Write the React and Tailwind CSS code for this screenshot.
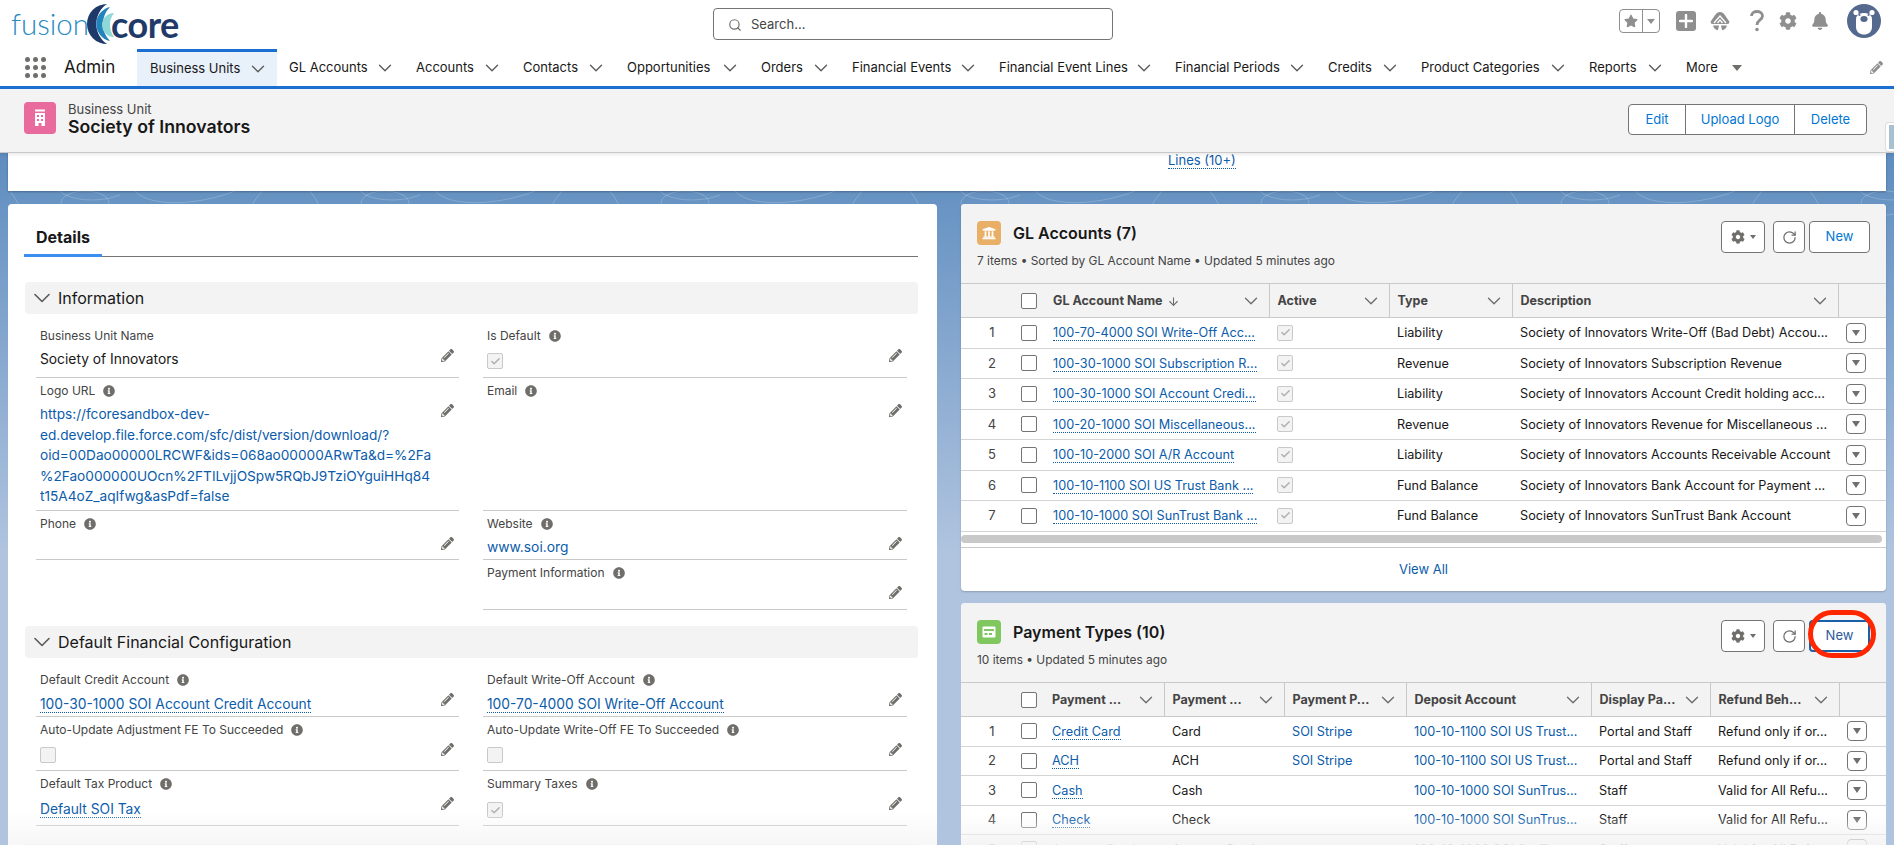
import React from 'react';
import { ChevronDown, Search, RotateCw, ArrowDown, Check } from 'lucide-react';
import { FaPencilAlt, FaInfoCircle, FaStar, FaCog, FaBell, FaUniversity } from 'react-icons/fa';

const NAV = [
  { label: 'GL Accounts', w: 'w-[127px]' },
  { label: 'Accounts', w: 'w-[107px]' },
  { label: 'Contacts', w: 'w-[104px]' },
  { label: 'Opportunities', w: 'w-[134px]' },
  { label: 'Orders', w: 'w-[91px]' },
  { label: 'Financial Events', w: 'w-[147px]' },
  { label: 'Financial Event Lines', w: 'w-[176px]' },
  { label: 'Financial Periods', w: 'w-[153px]' },
  { label: 'Credits', w: 'w-[93px]' },
  { label: 'Product Categories', w: 'w-[168px]' },
  { label: 'Reports', w: 'w-[97px]' },
];

const GL_ROWS = [
  ['100-70-4000 SOI Write-Off Acc...', 'Liability', 'Society of Innovators Write-Off (Bad Debt) Accou...'],
  ['100-30-1000 SOI Subscription R...', 'Revenue', 'Society of Innovators Subscription Revenue'],
  ['100-30-1000 SOI Account Credi...', 'Liability', 'Society of Innovators Account Credit holding acc...'],
  ['100-20-1000 SOI Miscellaneous...', 'Revenue', 'Society of Innovators Revenue for Miscellaneous ...'],
  ['100-10-2000 SOI A/R Account', 'Liability', 'Society of Innovators Accounts Receivable Account'],
  ['100-10-1100 SOI US Trust Bank ...', 'Fund Balance', 'Society of Innovators Bank Account for Payment ...'],
  ['100-10-1000 SOI SunTrust Bank ...', 'Fund Balance', 'Society of Innovators SunTrust Bank Account'],
];

const PAYMENT_ROWS = [
  ['Credit Card', 'Card', 'SOI Stripe', '100-10-1100 SOI US Trust...', 'Portal and Staff', 'Refund only if or...'],
  ['ACH', 'ACH', 'SOI Stripe', '100-10-1100 SOI US Trust...', 'Portal and Staff', 'Refund only if or...'],
  ['Cash', 'Cash', '', '100-10-1000 SOI SunTrus...', 'Staff', 'Valid for All Refu...'],
  ['Check', 'Check', '', '100-10-1000 SOI SunTrus...', 'Staff', 'Valid for All Refu...'],
  ['Account Credit', 'Account Credit', '', '100-10-1000 SOI SunTrus...', 'Staff', 'Valid for All Refu...'],
];

const cell = 'px-2 text-[12.7px] whitespace-nowrap overflow-hidden';
const dark = 'text-[#181818]';
const blue = 'text-[#0b5cab]';

const Pencil = () => (
  <span className="absolute right-[5px] top-[26px] text-[#706e6b]">
    <FaPencilAlt size={13} />
  </span>
);

const Info = () => <FaInfoCircle size={12} className="ml-2 text-[#706e6b]" />;

const DotLink = ({ children }) => (
  <a className="inline-block border-b border-dotted border-[#0b5cab] leading-[15px] text-[#0b5cab]">{children}</a>
);

const Disabled = ({ checked }) => (
  <span className="flex h-4 w-4 items-center justify-center rounded-[2px] border border-[#c9c9c9] bg-[#f3f3f3]">
    {checked && <Check size={11} strokeWidth={3} className="text-[#aeaeae]" />}
  </span>
);

const Box = () => <span className="block h-4 w-4 rounded-[2px] border border-[#747474] bg-white" />;

const Field = ({ label, info, h, children }) => (
  <div className={`relative border-b border-[#c9c9c9] px-1 pt-1 ${h}`}>
    <div className="flex h-[18px] items-center text-[12px] text-[#444444]">
      {label}
      {info && <Info />}
    </div>
    <div className="mt-1 text-[13.8px] leading-[20px] text-[#181818]">{children}</div>
    <Pencil />
  </div>
);

const Section = ({ title }) => (
  <div className="flex h-8 items-center rounded-[4px] bg-[#f3f3f3] pl-[3px] text-[16px] text-[#181818]">
    <ChevronDown size={28} strokeWidth={1.4} className="mr-[2px] text-[#5c5c5c]" />
    {title}
  </div>
);

const Th = ({ children, sort }) => (
  <th className="border-r border-[#c9c9c9] p-0 text-left">
    <div className="flex h-[33px] items-center justify-between pl-2 pr-[7px] pt-[1px] text-[12.5px] font-bold text-[#444444] whitespace-nowrap">
      <span className="flex items-center">
        {children}
        {sort && <ArrowDown size={13} className="ml-1 text-[#706e6b]" />}
      </span>
      <ChevronDown size={22} strokeWidth={1.5} className="text-[#706e6b]" />
    </div>
  </th>
);

const RowMenu = () => (
  <span className="ml-2 flex h-5 w-5 items-center justify-center rounded-[4px] border border-[#747474] bg-white">
    <span className="h-0 w-0 border-x-[4.5px] border-t-[6px] border-x-transparent border-t-[#706e6b]" />
  </span>
);

const CardHeader = ({ icon, title, sub, focused }) => (
  <div className="flex h-[79px] justify-between bg-[#f3f3f3] pl-4 pr-4 pt-[17px]">
    <div>
      <div className="flex h-6 items-center">
        {icon}
        <span className="ml-3 text-[16px] font-semibold text-[#181818]">{title}</span>
      </div>
      <div className="mt-[7px] text-[11.9px] leading-[18px] text-[#444444]">{sub}</div>
    </div>
    <div className="flex h-8">
      <button className="flex h-8 w-11 items-center justify-center gap-[5px] rounded-[4px] border border-[#747474] bg-white text-[#706e6b]">
        <FaCog size={14} />
        <span className="h-0 w-0 border-x-[3px] border-t-[4px] border-x-transparent border-t-[#706e6b]" />
      </button>
      <button className="ml-2 flex h-8 w-8 items-center justify-center rounded-[4px] border border-[#747474] bg-white text-[#706e6b]">
        <RotateCw size={15} />
      </button>
      {focused ? (
        <button className="relative ml-1 h-8 w-[61px] rounded-[4px] border-2 border-[#1b5fa8] bg-white text-[13px] text-[#2b5a9b]">
          New
          <span className="absolute -bottom-[8px] -left-[3px] -right-[8px] -top-[12px] rounded-[24px] border-[5px] border-[#ff2600]" />
        </button>
      ) : (
        <button className="ml-1 h-8 w-[61px] rounded-[4px] border border-[#747474] bg-white text-[13px] text-[#0176d3]">
          New
        </button>
      )}
    </div>
  </div>
);

const Logo = () => (
  <div className="flex w-[713px] items-center pl-[11px]">
    <span className="w-[76px] font-[Lato,sans-serif] text-[29.5px] font-light leading-none text-[#2a8ac0]">fusion</span>
    <svg viewBox="0 0 33 40" className="-mr-[9px] h-10 w-[33px] shrink-0">
      <path d="M20 0 A20 20 0 0 0 20 40 A24 24 0 0 1 20 0 Z" fill="#1f3a68" />
      <path d="M23 3 A17.400 17.400 0 0 0 23 37 A24 24 0 0 1 23 3 Z" fill="#2283bd" />
      <path d="M27 9 A12 12 0 0 0 27 33 A20 20 0 0 1 27 9 Z" fill="#8ed8d8" />
    </svg>
    <span className="font-[Lato,sans-serif] text-[36px] font-bold leading-none tracking-[-0.5px] text-[#1f3a68]">core</span>
  </div>
);

const Avatar = () => (
  <svg viewBox="0 0 34 34" className="ml-[18px] h-[34px] w-[34px]">
    <circle cx="17" cy="17" r="17" fill="#54698d" />
    <circle cx="9" cy="8.500" r="2.600" fill="#fff" />
    <circle cx="25" cy="8.500" r="2.600" fill="#fff" />
    <path d="M9 15 C9 7 25 7 25 15 L25 23 C25 33 9 33 9 23 Z" fill="#fff" />
    <circle cx="12.500" cy="11" r="1" fill="#54698d" />
    <circle cx="21.500" cy="11" r="1" fill="#54698d" />
    <ellipse cx="17" cy="15" rx="3.600" ry="3" fill="#54698d" />
  </svg>
);

const Trailhead = () => (
  <svg viewBox="0 0 20 20" className="ml-[14px] h-5 w-5 text-[#8f8f8f]" fill="currentColor">
    <path d="M10 1 C14 1 16 6 19 10 C20 12 19 13 17 13 L3 13 C1 13 0 12 1 10 C4 6 6 1 10 1 Z" />
    <path d="M3 14.500 L9 14.500 L8 19 C5.500 19 3.500 17 3 14.500 Z M11 14.500 L17 14.500 C16.500 17 14.500 19 12 19 Z" />
    <path d="M4 12 L10 5 L16 12 M7.500 12 L10 9 L12.500 12" fill="none" stroke="#fff" strokeWidth="1.300" />
  </svg>
);

export default function App() {
  return (
    <div className="flex h-[845px] w-[1894px] flex-col overflow-hidden bg-white font-[Inter,sans-serif]">
      {/* Global header */}
      <header className="flex h-[49px] shrink-0 items-start pt-[4px]">
        <Logo />
        <div className="mt-1 flex h-8 w-[400px] items-center rounded-[4px] border border-[#747474] bg-white pl-[14px] pt-[1px] text-[13px] text-[#444444]">
          <Search size={14} className="mr-[9px] text-[#706e6b]" />
          Search...
        </div>
        <div className="ml-auto flex items-center pr-[13px]">
          <div className="flex h-[24px] w-[41px] overflow-hidden rounded-[4px] border border-[#8f8f8f]">
            <span className="flex w-[23px] items-center justify-center border-r border-[#8f8f8f] text-[#8f8f8f]">
              <FaStar size={14} />
            </span>
            <span className="flex flex-1 items-center justify-center">
              <span className="h-0 w-0 border-x-[4px] border-t-[5px] border-x-transparent border-t-[#8f8f8f]" />
            </span>
          </div>
          <span className="ml-4 flex h-5 w-5 items-center justify-center rounded-[3px] bg-[#8f8f8f]">
            <svg viewBox="0 0 14 14" className="h-[14px] w-[14px]">
              <path d="M7 1 V13 M1 7 H13" stroke="#fff" strokeWidth="2.400" strokeLinecap="round" />
            </svg>
          </span>
          <Trailhead />
          <svg viewBox="0 0 14 22" className="ml-[20px] h-[22px] w-[14px] text-[#8f8f8f]" fill="none" stroke="currentColor">
            <path d="M1.500 6 C1.500 0 12.500 0 12.500 6 C12.500 10 7 10 7 15" strokeWidth="2.800" />
            <circle cx="7" cy="19.500" r="1.800" fill="currentColor" stroke="none" />
          </svg>
          <FaCog size={18} className="ml-[15px] text-[#8f8f8f]" />
          <FaBell size={18} className="ml-[14px] text-[#8f8f8f]" />
          <Avatar />
        </div>
      </header>

      {/* App nav */}
      <nav className="flex h-10 shrink-0 border-b-[3px] border-[#1b6fd1] bg-white text-[13px] text-[#181818]">
        <div className="grid w-[64px] shrink-0 place-content-start pl-[25px] pt-[8px]">
          <div className="grid grid-cols-3 gap-[3px]">
            {[0, 1, 2, 3, 4, 5, 6, 7, 8].map((i) => (
              <span key={i} className="h-[5px] w-[5px] rounded-full bg-[#706e6b]" />
            ))}
          </div>
        </div>
        <span className="flex w-[73px] shrink-0 items-center text-[17px]">Admin</span>
        <div className="flex w-[140px] shrink-0 items-center justify-between border-t-[3px] border-[#1b6fd1] bg-[#e8f0fa] pl-[13px] pr-[8px]">
          Business Units
          <ChevronDown size={22} strokeWidth={1.5} className="text-[#5c5c5c]" />
        </div>
        {NAV.map((n) => (
          <div key={n.label} className={`flex shrink-0 items-center justify-between pl-[12px] pr-[8px] ${n.w}`}>
            {n.label}
            <ChevronDown size={22} strokeWidth={1.5} className="text-[#5c5c5c]" />
          </div>
        ))}
        <div className="flex items-center pl-[12px]">
          More
          <span className="ml-[14px] h-0 w-0 border-x-[5px] border-t-[6px] border-x-transparent border-t-[#706e6b]" />
        </div>
        <span className="ml-auto flex items-center pr-[11px] text-[#8f8f8f]">
          <FaPencilAlt size={13} />
        </span>
      </nav>

      {/* Record highlights */}
      <div className="relative z-10 flex h-16 shrink-0 justify-between border-b border-[#c9c9c9] bg-[#f3f3f3] pl-6 pr-[27px] pt-[13px] shadow-[0_2px_3px_rgba(0,0,0,0.08)]">
        <div className="flex">
          <span className="flex h-8 w-8 items-center justify-center rounded-[4px] bg-[#e96a9d]">
            <svg viewBox="0 0 20 20" className="h-5 w-5" fill="#fff">
              <rect x="5" y="1.500" width="10" height="2" rx="0.500" />
              <path d="M5 5 H15 V18 H11.500 V15 H8.500 V18 H5 Z M7 7 V9 H9 V7 Z M11 7 V9 H13 V7 Z M7 11 V13 H9 V11 Z M11 11 V13 H13 V11 Z" fillRule="evenodd" />
            </svg>
          </span>
          <div className="ml-3 -mt-[1px]">
            <div className="text-[13px] leading-[16px] text-[#444444]">Business Unit</div>
            <div className="text-[17.700px] font-semibold leading-[20px] text-[#181818]">Society of Innovators</div>
          </div>
        </div>
        <div className="mt-[2px] flex h-[31px] rounded-[4px] border border-[#747474] bg-white text-[13px] text-[#0176d3]">
          <span className="flex w-[56px] items-center justify-center">Edit</span>
          <span className="flex w-[110px] items-center justify-center border-x border-[#747474]">Upload Logo</span>
          <span className="flex w-[71px] items-center justify-center">Delete</span>
        </div>
        <span className="absolute right-0 top-[33px] flex h-[30px] w-[9px] items-center rounded-l-[4px] border border-r-0 border-[#dddddd] bg-white pl-[3px]">
          <span className="h-[24px] w-full bg-[#a9c0d0]" />
        </span>
      </div>

      {/* Page body */}
      <main className="relative flex-1 overflow-hidden bg-linear-to-b from-[#5e8dbf] to-[#b0c4df] to-[58%] px-2">
        <svg viewBox="0 0 1894 120" className="absolute left-0 top-0 h-[120px] w-[1894px]" fill="none" stroke="#fff" strokeOpacity="0.2">
          {[0, 300, 600, 900, 1200, 1500, 1800].map((x) => (
            <g key={x} transform={`translate(${x} 0)`}>
              <path d="M60 38 C70 48 100 50 120 42 M135 38 C150 55 200 52 235 38" />
              <ellipse cx="85" cy="50" rx="24" ry="12" />
              <path d="M262 38 C258 44 255 46 252 52 M10 38 C14 44 18 48 18 52" />
            </g>
          ))}
        </svg>

        <div className="relative flex h-full flex-col">
          <div className="flex h-[38px] shrink-0 items-start bg-white pl-[1160px] text-[13px] shadow-[0_1px_2px_rgba(0,0,0,0.3)]">
            <div className="-mt-[2px]">
              <DotLink>Lines (10+)</DotLink>
            </div>
          </div>

          <div className="mt-[13px] flex min-h-0 flex-1 gap-6">
            {/* Details */}
            <section className="relative w-[929px] shrink-0 overflow-hidden rounded-t-[4px] bg-white pl-[17px] pr-[19px]">
              <div className="h-[53px] border-b border-[#747474] pl-[11px] pt-[23px]">
                <span className="relative -ml-[12px] block w-[78px] pl-[12px] text-[16px] font-bold leading-5 text-[#181818]">
                  Details
                  <span className="absolute -bottom-[10px] left-0 h-[3px] w-full bg-[#3b8ff0]" />
                </span>
              </div>
              <div className="mt-[25px]">
                <Section title="Information" />
                <div className="mt-[9px] grid grid-cols-[423px_424px] gap-x-6 px-[11px]">
                  <Field label="Business Unit Name" h="h-[55px]">Society of Innovators</Field>
                  <Field label="Is Default" info h="h-[55px]">
                    <div className="pt-1"><Disabled checked /></div>
                  </Field>
                  <Field label="Logo URL" info h="h-[133px]">
                    <div className="text-[13.650px] leading-[20.6px] whitespace-nowrap text-[#0b5cab]">
                      https://fcoresandbox-dev-<br />
                      ed.develop.file.force.com/sfc/dist/version/download/?<br />
                      oid=00Dao00000LRCWF&amp;ids=068ao00000ARwTa&amp;d=%2Fa<br />
                      %2Fao000000UOcn%2FTILvjjOSpw5RQbJ9TziOYguiHHq84<br />
                      t15A4oZ_aqIfwg&amp;asPdf=false
                    </div>
                  </Field>
                  <Field label="Email" info h="h-[133px]" />
                  <Field label="Phone" info h="h-[49px]" />
                  <Field label="Website" info h="h-[49px]">
                    <span className="text-[#0b5cab]">www.soi.org</span>
                  </Field>
                  <div />
                  <Field label="Payment Information" info h="h-[50px]" />
                </div>
              </div>
              <div className="mt-4">
                <Section title="Default Financial Configuration" />
                <div className="mt-[9px] grid grid-cols-[423px_424px] gap-x-6 px-[11px]">
                  <Field label="Default Credit Account" info h="h-[50px]">
                    <div className="pt-[1px]"><DotLink>100-30-1000 SOI Account Credit Account</DotLink></div>
                  </Field>
                  <Field label="Default Write-Off Account" info h="h-[50px]">
                    <div className="pt-[1px]"><DotLink>100-70-4000 SOI Write-Off Account</DotLink></div>
                  </Field>
                  <Field label="Auto-Update Adjustment FE To Succeeded" info h="h-[54px]">
                    <div className="pt-1"><Disabled /></div>
                  </Field>
                  <Field label="Auto-Update Write-Off FE To Succeeded" info h="h-[54px]">
                    <div className="pt-1"><Disabled /></div>
                  </Field>
                  <Field label="Default Tax Product" info h="h-[55px]">
                    <div className="pt-[2px]"><DotLink>Default SOI Tax</DotLink></div>
                  </Field>
                  <Field label="Summary Taxes" info h="h-[55px]">
                    <div className="pt-[5px]"><Disabled checked /></div>
                  </Field>
                </div>
              </div>
              <div className="mt-[18px] h-8 rounded-[4px] bg-[#f3f3f3]" />
              <div className="absolute inset-x-0 bottom-0 h-[35px] bg-linear-to-b from-transparent to-[#f3f3f3]/70" />
            </section>

            {/* Related lists */}
            <div className="flex min-w-0 flex-1 flex-col gap-3">
              <section className="h-[387px] shrink-0 overflow-hidden rounded-[4px] bg-white shadow-[0_1px_2px_rgba(0,0,0,0.2)]">
                <CardHeader
                  icon={
                    <span className="flex h-6 w-6 items-center justify-center rounded-[4px] bg-[#e9af67] text-white">
                      <FaUniversity size={14} />
                    </span>
                  }
                  title="GL Accounts (7)"
                  sub="7 items • Sorted by GL Account Name • Updated 5 minutes ago"
                />
                <table className="w-full table-fixed border-collapse">
                  <colgroup>
                    <col className="w-[52px]" />
                    <col className="w-8" />
                    <col className="w-[224px]" />
                    <col className="w-[120px]" />
                    <col className="w-[123px]" />
                    <col className="w-[326px]" />
                    <col />
                  </colgroup>
                  <thead className="border-y border-[#c9c9c9] bg-[#f3f3f3]">
                    <tr>
                      <th className="p-0" />
                      <th className="p-0 pl-2"><Box /></th>
                      <Th sort>GL Account Name</Th>
                      <Th>Active</Th>
                      <Th>Type</Th>
                      <Th>Description</Th>
                      <th className="p-0" />
                    </tr>
                  </thead>
                  <tbody>
                    {GL_ROWS.map((r, i) => (
                      <tr key={r[0]} className="h-[30.5px] border-b border-[#d4d4d4]">
                        <td className="pl-[10px] text-center text-[13px] text-[#444444]">{i + 1}</td>
                        <td className="pl-2"><Box /></td>
                        <td className={cell}><DotLink>{r[0]}</DotLink></td>
                        <td className={cell}><Disabled checked /></td>
                        <td className={`${cell} ${dark}`}>{r[1]}</td>
                        <td className={`${cell} ${dark}`}>{r[2]}</td>
                        <td><RowMenu /></td>
                      </tr>
                    ))}
                  </tbody>
                </table>
                <div className="flex h-[16px] items-center border-b border-[#c9c9c9] pr-[4px]">
                  <span className="h-2 w-full rounded-full bg-[#c9c9c9]" />
                </div>
                <div className="flex h-[44px] items-center justify-center text-[13px] text-[#0b5cab]">View All</div>
              </section>

              <section className="relative min-h-0 flex-1 overflow-hidden rounded-t-[4px] bg-white">
                <CardHeader
                  focused
                  icon={
                    <span className="flex h-6 w-6 items-center justify-center rounded-[4px] bg-[#7fc75e]">
                      <svg viewBox="0 0 16 16" className="h-4 w-4">
                        <rect x="1.500" y="2.500" width="13" height="11" rx="1" fill="#fff" />
                        <rect x="3" y="5" width="10" height="2" fill="#7fc75e" />
                        <rect x="3.500" y="9" width="3" height="2" fill="#7fc75e" />
                        <rect x="8" y="9" width="3" height="2" fill="#7fc75e" />
                      </svg>
                    </span>
                  }
                  title="Payment Types (10)"
                  sub="10 items • Updated 5 minutes ago"
                />
                <table className="w-full table-fixed border-collapse">
                  <colgroup>
                    <col className="w-[52px]" />
                    <col className="w-[31px]" />
                    <col className="w-[120px]" />
                    <col className="w-[120px]" />
                    <col className="w-[122px]" />
                    <col className="w-[185px]" />
                    <col className="w-[119px]" />
                    <col className="w-[129px]" />
                    <col />
                  </colgroup>
                  <thead className="border-y border-[#c9c9c9] bg-[#f3f3f3]">
                    <tr>
                      <th className="p-0" />
                      <th className="p-0 pl-2"><Box /></th>
                      <Th>Payment ...</Th>
                      <Th>Payment ...</Th>
                      <Th>Payment P...</Th>
                      <Th>Deposit Account</Th>
                      <Th>Display Pa...</Th>
                      <Th>Refund Beh...</Th>
                      <th className="p-0" />
                    </tr>
                  </thead>
                  <tbody>
                    {PAYMENT_ROWS.map((r, i) => (
                      <tr key={r[0]} className="h-[29.5px] border-b border-[#d4d4d4]">
                        <td className="pl-[10px] text-center text-[13px] text-[#444444]">{i + 1}</td>
                        <td className="pl-2"><Box /></td>
                        <td className={cell}><DotLink>{r[0]}</DotLink></td>
                        <td className={`${cell} ${dark}`}>{r[1]}</td>
                        <td className={`${cell} ${blue}`}>{r[2]}</td>
                        <td className={`${cell} ${blue}`}>{r[3]}</td>
                        <td className={`${cell} ${dark}`}>{r[4]}</td>
                        <td className={`${cell} ${dark}`}>{r[5]}</td>
                        <td><RowMenu /></td>
                      </tr>
                    ))}
                  </tbody>
                </table>
                <div className="absolute inset-x-0 bottom-0 h-[30px] bg-linear-to-b from-transparent to-[#f3f3f3]/90" />
              </section>
            </div>
          </div>
        </div>
      </main>
    </div>
  );
}
